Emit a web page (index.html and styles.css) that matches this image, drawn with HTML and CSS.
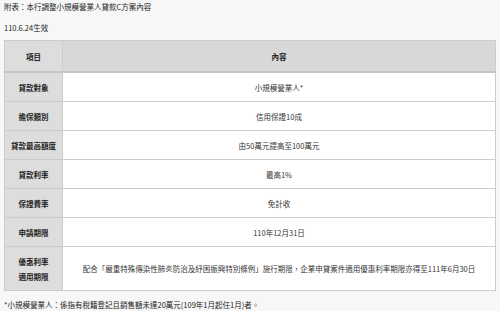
FILE: index.html
```html
<!DOCTYPE html>
<html lang="zh-Hant">
<head>
<meta charset="utf-8">
<link rel="stylesheet" href="styles.css">
</head>
<body>
<p class="title">附表：本行調整小規模營業人貸款C方案內容</p>
<p class="date">110.6.24生效</p>
<table class="plan">
  <thead>
    <tr><th class="label">項目</th><th class="head">內容</th></tr>
  </thead>
  <tbody>
    <tr><th class="label">貸款對象</th><td>小規模營業人*</td></tr>
    <tr><th class="label">擔保類別</th><td>信用保證10成</td></tr>
    <tr><th class="label">貸款最高額度</th><td>由50萬元提高至100萬元</td></tr>
    <tr><th class="label">貸款利率</th><td>最高1%</td></tr>
    <tr><th class="label">保證費率</th><td>免計收</td></tr>
    <tr><th class="label">申請期限</th><td>110年12月31日</td></tr>
    <tr class="tall"><th class="label">優惠利率<br>適用期限</th><td>配合「嚴重特殊傳染性肺炎防治及紓困振興特別條例」施行期限，企業申貸案件適用優惠利率期限亦得至111年6月30日</td></tr>
  </tbody>
</table>
<p class="note">*小規模營業人：係指有稅籍登記且銷售額未達20萬元(109年1月起任1月)者。</p>
</body>
</html>
```
FILE: styles.css
```css
html, body {
  margin: 0;
  background: #f7f7f7;
}
body {
  padding: 2px 4px 0 4px;
  font-family: "Noto Sans CJK TC", "Noto Sans", sans-serif;
  font-size: 7.5px;
  color: #222;
}
.title {
  margin: 0;
  line-height: 10px;
}
.date {
  margin: 11px 0 0 0;
  line-height: 10px;
}
.plan {
  margin-top: 7px;
  width: 492px;
  border-collapse: collapse;
  background: #fff;
  border: 1px solid #c9c9c9;
}
.plan th, .plan td {
  border: 1px solid #cccccc;
  text-align: center;
  padding: 0;
  line-height: 15px;
  height: 28px;
}
.plan thead th {
  background: #d8d8d8;
  height: 30px;
  font-weight: bold;
  color: #222;
  border-bottom: 2px solid #c6c6c6;
}
.plan .label {
  width: 57px;
  background: #dddddd;
  font-weight: bold;
  color: #222;
}
.plan td {
  color: #333;
}
.plan .tall th, .plan .tall td {
  height: 43px;
}
.note {
  margin: 9px 0 0 0;
  line-height: 10px;
}
```
